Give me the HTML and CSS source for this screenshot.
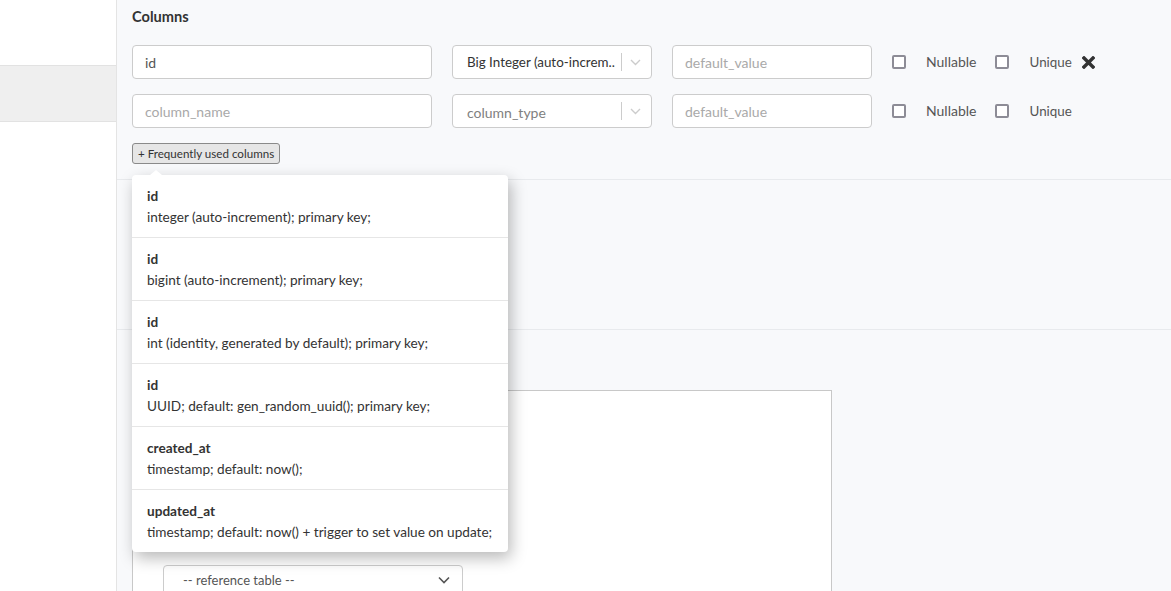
FILE: index.html
```html
<!DOCTYPE html>
<html>
<head>
<meta charset="utf-8">
<link rel="stylesheet" href="styles.css">
</head>
<body>
<div class="app">
  <aside class="sidebar">
    <div class="side-top"></div>
    <div class="side-item"></div>
  </aside>
  <main class="main">
    <section class="section columns">
      <h4 class="heading">Columns</h4>
      <div class="col-row">
        <input class="input name" type="text" value="id">
        <div class="select">
          <span class="select-value">Big Integer (auto-increm..</span>
          <span class="select-sep"></span>
          <svg class="chev" width="11" height="7" viewBox="0 0 11 7"><path d="M1 1l4.5 4.5L10 1" fill="none" stroke="#ccc" stroke-width="1.4"/></svg>
        </div>
        <input class="input def" type="text" placeholder="default_value">
        <label class="check"><span class="box"></span><span class="check-label">Nullable</span></label>
        <label class="check"><span class="box"></span><span class="check-label">Unique</span></label>
        <svg class="remove" width="13" height="13" viewBox="0 0 13 13"><path d="M2 2l9 9M11 2l-9 9" stroke="#333" stroke-width="3.4" stroke-linecap="square" fill="none"/></svg>
      </div>
      <div class="col-row">
        <input class="input name" type="text" placeholder="column_name">
        <div class="select">
          <span class="select-value placeholder">column_type</span>
          <span class="select-sep"></span>
          <svg class="chev" width="11" height="7" viewBox="0 0 11 7"><path d="M1 1l4.5 4.5L10 1" fill="none" stroke="#ccc" stroke-width="1.4"/></svg>
        </div>
        <input class="input def" type="text" placeholder="default_value">
        <label class="check"><span class="box"></span><span class="check-label">Nullable</span></label>
        <label class="check"><span class="box"></span><span class="check-label">Unique</span></label>
      </div>
      <button class="freq-btn">+ Frequently used columns</button>

      <div class="freq-menu">
        <span class="caret"></span>
        <div class="freq-item"><div class="freq-title">id</div><div class="freq-desc">integer (auto-increment); primary key;</div></div>
        <div class="freq-item"><div class="freq-title">id</div><div class="freq-desc">bigint (auto-increment); primary key;</div></div>
        <div class="freq-item"><div class="freq-title">id</div><div class="freq-desc">int (identity, generated by default); primary key;</div></div>
        <div class="freq-item"><div class="freq-title">id</div><div class="freq-desc">UUID; default: gen_random_uuid(); primary key;</div></div>
        <div class="freq-item"><div class="freq-title">created_at</div><div class="freq-desc">timestamp; default: now();</div></div>
        <div class="freq-item"><div class="freq-title">updated_at</div><div class="freq-desc">timestamp; default: now() + trigger to set value on update;</div></div>
      </div>
    </section>
    <section class="section middle"></section>
    <section class="section lower">
      <div class="fk-box">
        <div class="ref-select">
          <span>-- reference table --</span>
          <svg width="12" height="8" viewBox="0 0 12 8"><path d="M1 1.5l5 5 5-5" fill="none" stroke="#555" stroke-width="1.6"/></svg>
        </div>
      </div>
    </section>
  </main>
</div>
</body>
</html>
```

FILE: styles.css
```css
* { box-sizing: border-box; }
html, body { margin: 0; padding: 0; }
body {
  font-family: "Lato", "Open Sans", sans-serif;
  color: #333;
  width: 1171px;
  height: 591px;
  overflow: hidden;
}
.app { display: flex; height: 591px; }
.sidebar {
  width: 117px;
  flex: none;
  background: #fff;
  border-right: 1px solid #e4e4e4;
}
.side-top { height: 65px; }
.side-item {
  height: 57px;
  background: #efefef;
  border-top: 1px solid #e2e2e2;
  border-bottom: 1px solid #e2e2e2;
}
.main {
  flex: 1;
  background: #f8f9fb;
  position: relative;
  overflow: hidden;
}
.section { padding: 0 15px; border-bottom: 1px solid #e8eaed; }
.columns { height: 180px; padding-top: 8px; position: relative; }
.heading { margin: 0 0 20px; font-size: 14.6px; font-weight: 700; line-height: 17px; color: #333; }
.col-row { display: flex; align-items: center; height: 34px; margin-bottom: 15px; }
.input {
  height: 34px;
  border: 1px solid #ccc;
  border-radius: 4px;
  background: #fff;
  padding: 0 12px;
  font-family: inherit;
  font-size: 14px;
  color: #555;
  outline: none;
}
.input::placeholder { color: #a9a9a9; }
.input.name { width: 300px; }
.input.def { width: 200px; margin-left: 20px; }
.select {
  width: 200px;
  height: 34px;
  margin-left: 20px;
  border: 1px solid #ccc;
  border-radius: 4px;
  background: #fff;
  display: flex;
  align-items: center;
  padding: 0 10px 0 14px;
  font-size: 13.4px;
}
.select-value { flex: 1; color: #333; white-space: nowrap; overflow: hidden; }
.select-value.placeholder { color: #808080; padding-top: 3px; font-size: 14px; }
.select-sep { width: 1px; height: 18px; background: #ccc; margin: 0 8px 0 2px; }
.chev { display: block; }
.check { display: flex; align-items: center; margin-left: 20px; font-size: 14px; color: #555; }
.box {
  width: 14px; height: 14px;
  border: 2px solid #8d8c96;
  border-radius: 2px;
  background: #fff;
  margin-right: 20px;
}
.check + .check { margin-left: 19px; }
.check-label { line-height: 16px; }
.check + .check .check-label { font-size: 13.4px; }
.remove { margin-left: 10px; display: block; }
.freq-btn {
  margin-top: 1px;
  height: 21px;
  padding: 0 5px;
  font-family: inherit;
  font-size: 11.6px;
  color: #333;
  background: #e6e6e6;
  border: 1px solid #8a8a8a;
  border-radius: 3px;
  display: block;
}
.freq-menu {
  position: absolute;
  left: 15px;
  top: 175px;
  width: 376px;
  background: #fff;
  border-radius: 4px;
  box-shadow: 3px 6px 16px rgba(0,0,0,0.28);
  z-index: 10;
}
.caret {
  position: absolute;
  left: 18px;
  top: -5px;
  width: 0; height: 0;
  border-left: 6px solid transparent;
  border-right: 6px solid transparent;
  border-bottom: 5px solid #fff;
}
.freq-item {
  height: 63px;
  padding: 13px 15px 0;
  border-bottom: 1px solid #e6e6e6;
}
.freq-item:last-child { border-bottom: none; height: 62px; }
.freq-title { font-size: 13.6px; font-weight: 700; line-height: 17px; color: #333; }
.freq-desc { font-size: 13.6px; line-height: 17px; margin-top: 4px; color: #333; }
.middle { height: 150px; }
.lower { border-bottom: none; padding-top: 60px; }
.fk-box {
  width: 700px;
  height: 220px;
  background: #fff;
  border: 1px solid #c8c8c8;
  padding: 174px 0 0 30px;
}
.ref-select {
  width: 300px;
  height: 30px;
  border: 1px solid #ccc;
  border-radius: 4px;
  display: flex;
  align-items: center;
  justify-content: space-between;
  padding: 0 12px 0 19px;
  font-size: 13px;
  color: #555;
}
```
